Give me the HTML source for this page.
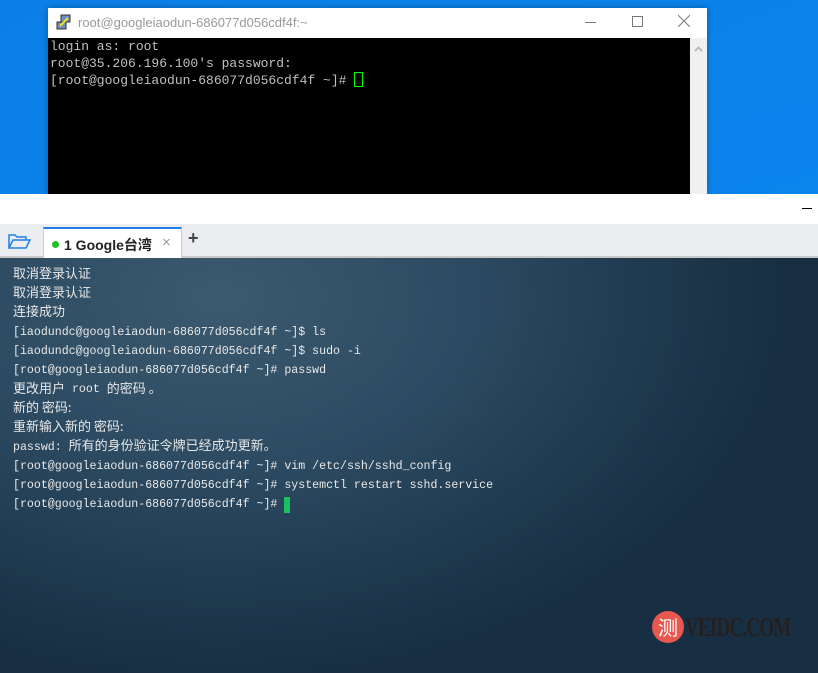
<!DOCTYPE html>
<html><head><meta charset="utf-8"><style>
*{margin:0;padding:0;box-sizing:border-box}
body{width:818px;height:673px;overflow:hidden;position:relative;background:linear-gradient(160deg,#0b7fe6 0%,#0a86ee 60%,#0c78de 100%);font-family:"Liberation Sans","Noto Sans CJK SC",sans-serif}
.putty{position:absolute;left:48px;top:8px;width:659px;height:186px;background:#fff;box-shadow:0 0 6px rgba(0,0,0,.3)}
.ptitle{position:absolute;left:0;top:0;width:659px;height:30px;background:#fff}
.ptitle .t{position:absolute;left:30px;top:7px;font-size:13px;color:#999}
.pterm{position:absolute;left:0;top:30px;width:642px;height:156px;background:#000;font-family:"Liberation Mono",monospace;font-size:13px;line-height:16.5px;color:#c0c0c0;padding:1px 0 0 2px;white-space:pre}
.pscroll{position:absolute;left:642px;top:30px;width:17px;height:156px;background:#f0f0f0}
.xs{position:absolute;left:0;top:194px;width:818px;height:479px}
.wbar{position:absolute;left:0;top:0;width:818px;height:30px;background:#fff}
.tabbar{position:absolute;left:0;top:30px;width:818px;height:34px;background:#ecedf1;border-bottom:2px solid #c8c8c8}
.tab{position:absolute;left:43px;top:3px;width:139px;height:32px;background:#fff;border-top:2px solid #1e7fe6;border-left:1px solid #ccc;border-right:1px solid #ccc;font-size:14px;font-weight:bold;color:#222}
.term{position:absolute;left:0;top:64px;width:818px;height:415px;background:radial-gradient(ellipse 560px 380px at 220px 40px,#3b5a6f 0%,#2c4a61 45%,#1e384d 80%,#182f43 100%);font-family:"Liberation Mono",monospace;font-size:11.6px;color:#e8e8e8;padding:7px 0 0 13px}
.term div{height:19.2px;display:flex;align-items:center;white-space:pre}
.c{font-family:"Noto Sans CJK SC",sans-serif;font-size:13px;line-height:16px;position:relative;top:-2px}
</style></head><body>
<div class="putty">
 <div class="ptitle">
  <svg style="position:absolute;left:8px;top:6px" width="16" height="17" viewBox="0 0 16 17"><rect x="5" y="1" width="9" height="7" fill="#6a8fc0" stroke="#333"/><rect x="1" y="8" width="9" height="7" fill="#6a8fc0" stroke="#333"/><path d="M4 12 L12 4" stroke="#f0e020" stroke-width="2"/></svg>
  <span class="t">root@googleiaodun-686077d056cdf4f:~</span>
  <div style="position:absolute;left:537px;top:14px;width:11px;height:1px;background:#777"></div>
  <div style="position:absolute;left:584px;top:8px;width:11px;height:11px;border:1px solid #777"></div>
  <svg style="position:absolute;left:630px;top:7px" width="12" height="12"><path d="M0 0L12 12M12 0L0 12" stroke="#777"/></svg>
 </div>
 <div class="pterm">login as: root
root@35.206.196.100's password:
[root@googleiaodun-686077d056cdf4f ~]# <span style="display:inline-block;width:9px;height:15px;border:1px solid #0f0;vertical-align:-3px"></span></div>
 <div class="pscroll"><svg style="position:absolute;left:4px;top:8px" width="9" height="6"><path d="M1 5L4.5 1.5L8 5" stroke="#bbb" stroke-width="2" fill="none"/></svg></div>
</div>
<div class="xs">
 <div class="wbar"><div style="position:absolute;left:802px;top:14px;width:10px;height:1px;background:#000"></div></div>
 <div class="tabbar">
  <svg style="position:absolute;left:8px;top:9px" width="23" height="17" viewBox="0 0 23 17"><path d="M1 15V2h6l2 2h9v3" fill="none" stroke="#1e7fe6" stroke-width="1.5"/><path d="M1 15L5 7h17l-4 8z" fill="none" stroke="#1e7fe6" stroke-width="1.5"/></svg>
  <div class="tab">
   <span style="position:absolute;left:8px;top:12px;width:7px;height:7px;border-radius:50%;background:#22c022"></span>
   <span style="position:absolute;left:20px;top:6px">1 Google台湾</span>
   <span style="position:absolute;left:118px;top:5px;color:#999;font-weight:normal;font-size:15px">×</span>
  </div>
  <span style="position:absolute;left:188px;top:4px;font-size:18px;font-weight:bold;color:#444">+</span>
 </div>
 <div class="term">
<div><span class="c">取消登录认证</span></div>
<div><span class="c">取消登录认证</span></div>
<div><span class="c">连接成功</span></div>
<div>[iaodundc@googleiaodun-686077d056cdf4f ~]$ ls</div>
<div>[iaodundc@googleiaodun-686077d056cdf4f ~]$ sudo -i</div>
<div>[root@googleiaodun-686077d056cdf4f ~]# passwd</div>
<div><span class="c">更改用户</span><span> root </span><span class="c">的密码 。</span></div>
<div><span class="c">新的 密码:</span></div>
<div><span class="c">重新输入新的 密码:</span></div>
<div><span>passwd: </span><span class="c">所有的身份验证令牌已经成功更新。</span></div>
<div>[root@googleiaodun-686077d056cdf4f ~]# vim /etc/ssh/sshd_config</div>
<div>[root@googleiaodun-686077d056cdf4f ~]# systemctl restart sshd.service</div>
<div><span>[root@googleiaodun-686077d056cdf4f ~]# </span><span style="display:inline-block;width:6px;height:16px;background:#18c060"></span></div>
 </div>
 <div style="position:absolute;left:652px;top:417px;width:32px;height:32px;border-radius:50%;background:#e8584f;color:#fff;font-size:20px;text-align:center;line-height:31px;font-family:'Noto Sans CJK SC',sans-serif">测</div>
 <div style="position:absolute;left:685px;top:418px;font-family:'Liberation Serif',serif;font-size:27px;font-weight:bold;color:#231f1f;letter-spacing:-1px;transform:scaleX(.7);transform-origin:left;white-space:nowrap">VEIDC.COM</div>
</div>
</body></html>
